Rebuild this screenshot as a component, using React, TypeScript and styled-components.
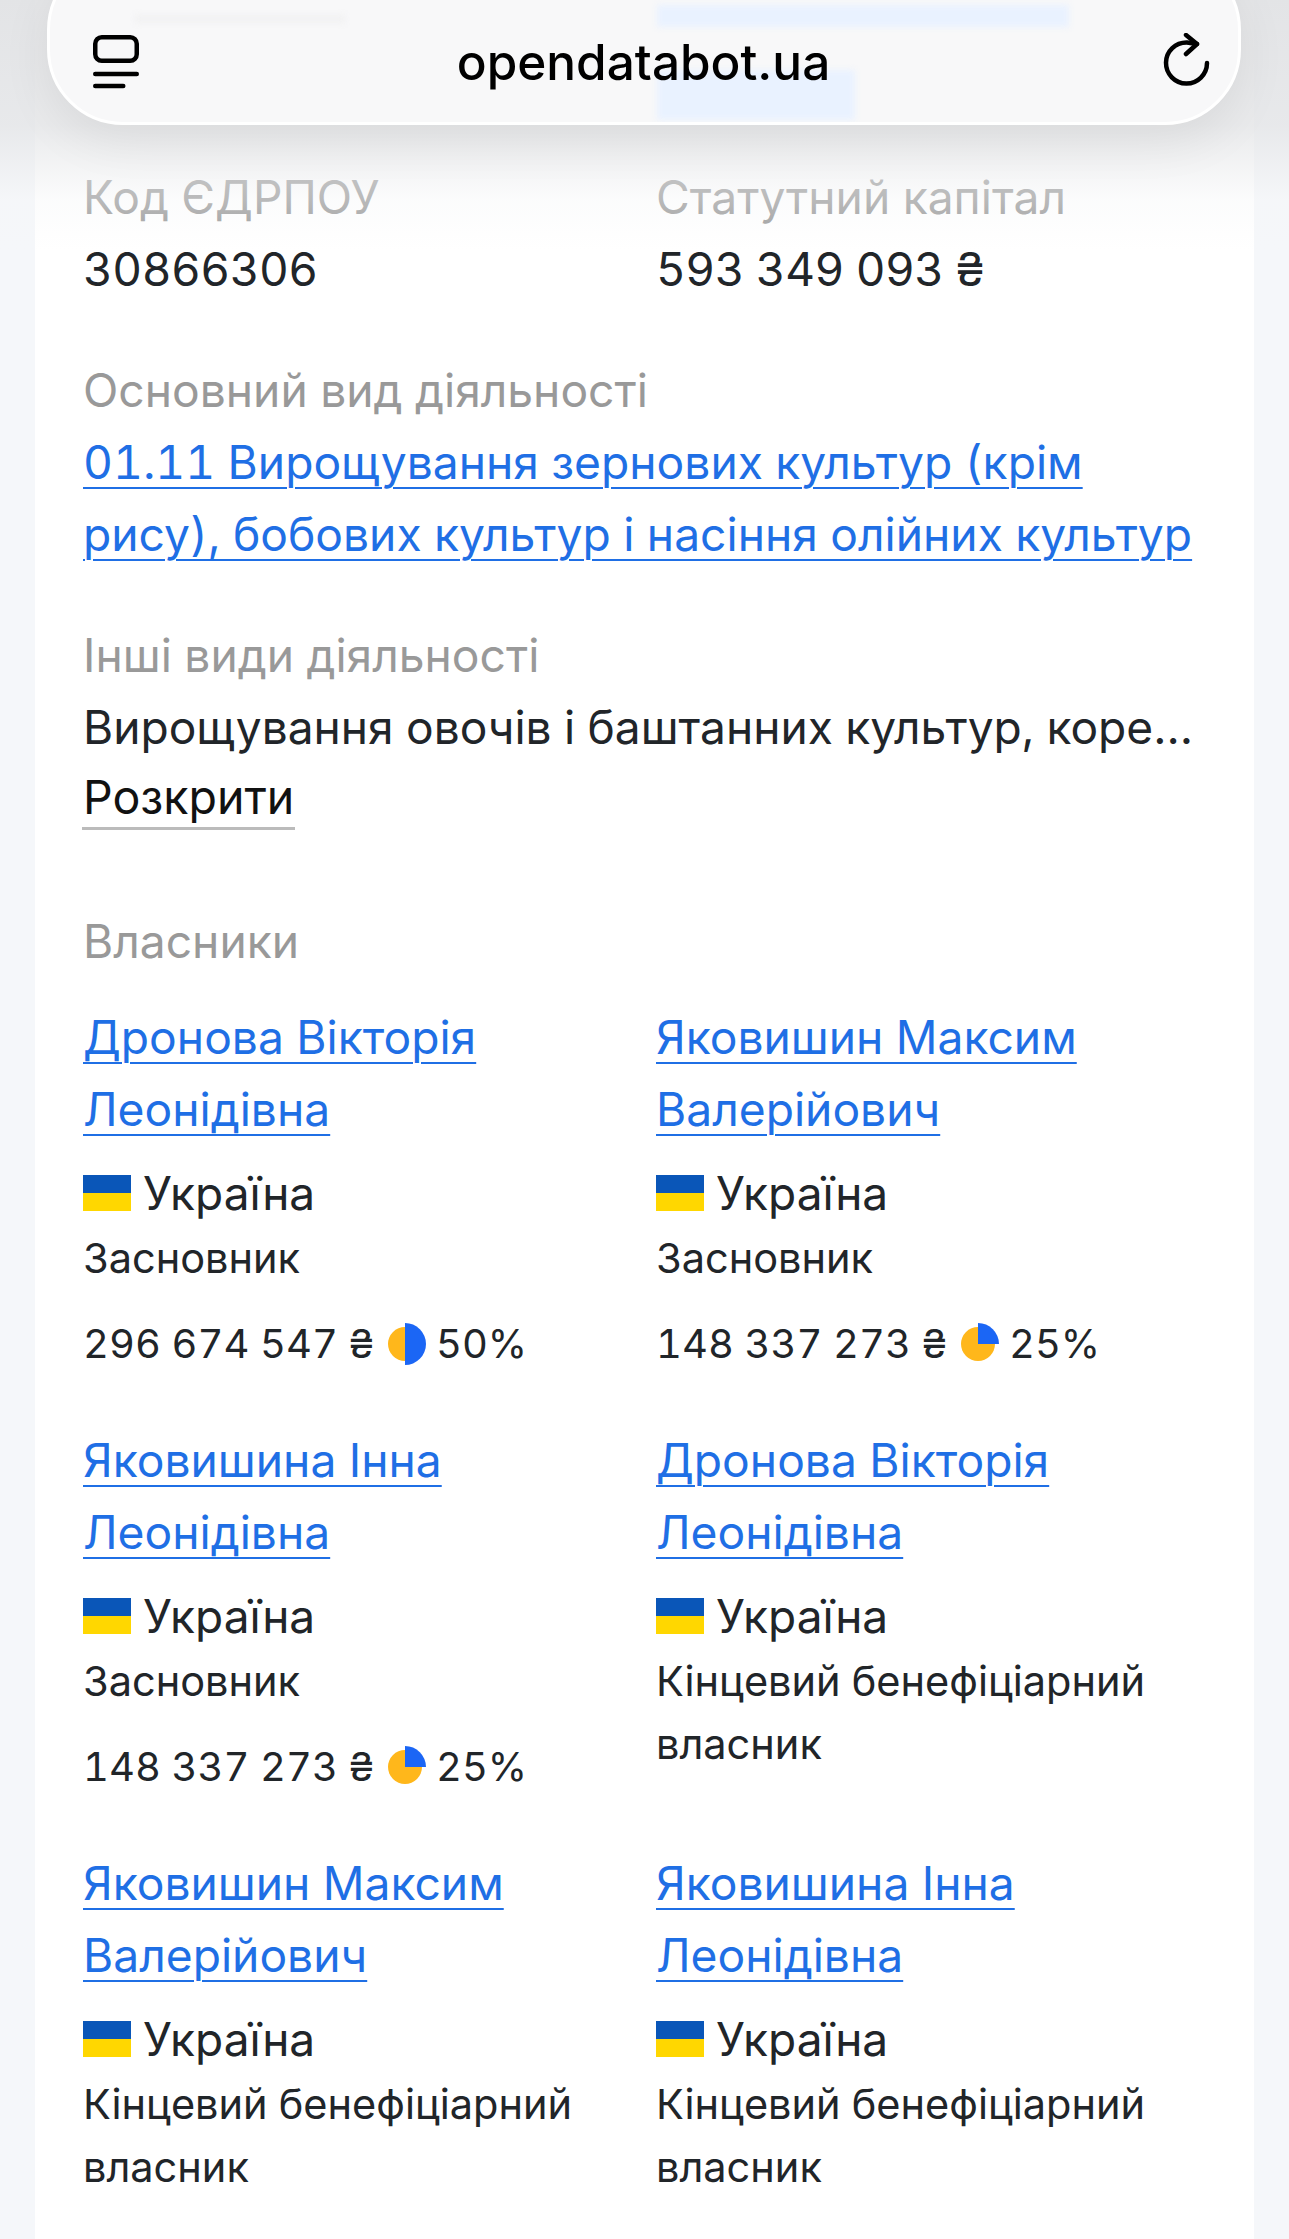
import styled, { createGlobalStyle } from 'styled-components';

const GlobalStyle = createGlobalStyle`
  html, body {
    margin: 0;
    padding: 0;
    background: #f5f7fa;
  }
  body {
    font-family: Inter, "Noto Sans", sans-serif;
    font-feature-settings: "tnum";
    color: #212529;
  }
`;

const Page = styled.div`
  position: relative;
  width: 1289px;
  height: 2239px;
  overflow: hidden;
  padding: 0 35px;
  box-sizing: border-box;
`;

const Card = styled.main`
  background: #fff;
  height: 100%;
  padding: 161px 49px 0 48px;
  box-sizing: border-box;
`;

const TopShade = styled.div`
  position: absolute;
  inset: 0 0 auto 0;
  height: 250px;
  background: linear-gradient(to bottom, rgba(225, 226, 228, 0.9) 0%, rgba(228, 229, 231, 0.8) 50%, rgba(245, 246, 247, 0.35) 80%, rgba(255, 255, 255, 0) 100%);
  pointer-events: none;
`;

const BrowserBar = styled.header`
  position: absolute;
  left: 47px;
  top: -46px;
  width: 1194px;
  height: 171px;
  border-radius: 76px;
  background: #f8f8f9;
  border: 3px solid #fff;
  box-shadow: 0 16px 50px rgba(0, 0, 0, 0.07);
  overflow: hidden;
  display: flex;
  align-items: center;
  justify-content: space-between;
  padding: 46px 25px 0 43px;
  box-sizing: border-box;
`;

const Ghost = styled.div<{ $top: number; $left: number; $width: number; $height: number; $tint: string }>`
  position: absolute;
  top: ${(p) => p.$top}px;
  left: ${(p) => p.$left}px;
  width: ${(p) => p.$width}px;
  height: ${(p) => p.$height}px;
  background: ${(p) => p.$tint};
  filter: blur(3px);
`;

const Url = styled.span`
  position: relative;
  margin: 0 15px 2px 0;
  font-size: 49.5px;
  font-weight: 500;
  font-feature-settings: normal;
  color: #000;
`;

const IconSlot = styled.svg`
  position: relative;
  flex: none;
  display: block;
`;

const TwoColumns = styled.div`
  display: grid;
  grid-template-columns: 548px 548px;
  column-gap: 25px;
`;

const Section = styled.section`
  margin-top: 49px;
`;

const OwnersSection = styled.section`
  margin-top: 75px;
`;

const Label = styled.div`
  font-size: 46.2px;
  line-height: 72px;
  color: #999;
`;

const Value = styled.div`
  font-size: 46px;
  line-height: 72px;
  letter-spacing: -0.5px;
  color: #212529;
`;

const TruncatedValue = styled(Value)`
  font-size: 46.1px;
  letter-spacing: 0;
  white-space: nowrap;
  overflow: hidden;
  text-overflow: ellipsis;
`;

const LinkBlock = styled.div`
  font-size: 46.2px;
  line-height: 72px;
`;

const Link = styled.a`
  color: #1f6fe5;
  text-decoration: underline;
  text-decoration-thickness: 2px;
  text-underline-offset: 8px;
`;

const Expand = styled.span`
  display: inline-block;
  padding: 4px 1px 0;
  margin: 0 0 0 -1px;
  font-size: 46.5px;
  line-height: 60px;
  color: #111;
  border-bottom: 3px solid #bbb;
`;

const OwnersHeading = styled(Label)`
  margin-bottom: 24px;
`;

const OwnersGrid = styled(TwoColumns)`
  row-gap: 0;
`;

const OwnerCard = styled.article`
  padding-bottom: 49px;
`;

const Country = styled.div`
  display: flex;
  align-items: center;
  gap: 12px;
  margin-top: 12px;
  font-size: 46px;
  line-height: 72px;
  color: #212529;
`;

const Flag = styled.span`
  display: block;
  width: 48px;
  height: 36px;
  flex: none;
  background: linear-gradient(to bottom, #0a56b8 0 50%, #ffd700 50% 100%);
`;

const Role = styled.div`
  margin-top: -2px;
  font-size: 41.5px;
  line-height: 63px;
  color: #212529;
`;

const Share = styled.div`
  display: flex;
  align-items: center;
  margin-top: 22px;
  font-size: 40px;
  line-height: 63px;
  color: #212529;
`;

const PieSvg = styled.svg`
  flex: none;
  margin: 0 10px 0 12px;
`;

type Owner = { name: string; role: string; amount?: string; share?: 25 | 50 };

const owners: Owner[] = [
  { name: 'Дронова Вікторія Леонідівна', role: 'Засновник', amount: '296 674 547 ₴', share: 50 },
  { name: 'Яковишин Максим Валерійович', role: 'Засновник', amount: '148 337 273 ₴', share: 25 },
  { name: 'Яковишина Інна Леонідівна', role: 'Засновник', amount: '148 337 273 ₴', share: 25 },
  { name: 'Дронова Вікторія Леонідівна', role: 'Кінцевий бенефіціарний власник' },
  { name: 'Яковишин Максим Валерійович', role: 'Кінцевий бенефіціарний власник' },
  { name: 'Яковишина Інна Леонідівна', role: 'Кінцевий бенефіціарний власник' },
];

function TabsIcon() {
  return (
    <IconSlot width="46" height="56" viewBox="0 0 46 56" fill="none">
      <rect x="2.25" y="2.25" width="41.5" height="23.5" rx="6.5" stroke="#000" strokeWidth="4.5" />
      <path d="M2.25 39h41.5" stroke="#000" strokeWidth="4.5" strokeLinecap="round" />
      <path d="M2.25 51h28" stroke="#000" strokeWidth="4.5" strokeLinecap="round" />
    </IconSlot>
  );
}

function ReloadIcon() {
  return (
    <IconSlot width="50" height="60" viewBox="0 0 50 60" fill="none">
      <path d="M44 30A20.5 20.5 0 1 1 24 9.5L34 11" stroke="#000" strokeWidth="4.5" strokeLinecap="round" />
      <path d="M23 2l11 9L23 21" stroke="#000" strokeWidth="4.5" strokeLinecap="round" strokeLinejoin="round" />
    </IconSlot>
  );
}

function Pie({ share }: { share: 25 | 50 }) {
  return (
    <PieSvg width="40" height="44" viewBox="0 0 40 44">
      <circle cx="19" cy="22" r="17" fill="#ffb71b" />
      {share === 25 ? (
        <path d="M19 22V1a21 21 0 0 1 21 21z" fill="#1b66f5" />
      ) : (
        <path d="M19 1a21 21 0 0 1 0 42z" fill="#1b66f5" />
      )}
    </PieSvg>
  );
}

function App() {
  return (
    <Page>
      <GlobalStyle />
      <Card>
        <TwoColumns>
          <div>
            <Label>Код ЄДРПОУ</Label>
            <Value>30866306</Value>
          </div>
          <div>
            <Label>Статутний капітал</Label>
            <Value>593 349 093 ₴</Value>
          </div>
        </TwoColumns>
        <Section>
          <Label>Основний вид діяльності</Label>
          <LinkBlock>
            <Link href="#">01.11 Вирощування зернових культур (крім рису), бобових культур і насіння олійних культур</Link>
          </LinkBlock>
        </Section>
        <Section>
          <Label>Інші види діяльності</Label>
          <TruncatedValue>Вирощування овочів і баштанних культур, коренеплодів і бульбоплодів</TruncatedValue>
          <Expand>Розкрити</Expand>
        </Section>
        <OwnersSection>
          <OwnersHeading>Власники</OwnersHeading>
          <OwnersGrid>
            {owners.map((owner) => (
              <OwnerCard key={owner.name + owner.role}>
                <LinkBlock>
                  <Link href="#">{owner.name}</Link>
                </LinkBlock>
                <Country>
                  <Flag />
                  Україна
                </Country>
                <Role>{owner.role}</Role>
                {owner.amount && owner.share && (
                  <Share>
                    {owner.amount}
                    <Pie share={owner.share} />
                    {owner.share}%
                  </Share>
                )}
              </OwnerCard>
            ))}
          </OwnersGrid>
        </OwnersSection>
      </Card>
      <TopShade />
      <BrowserBar>
        <Ghost $top={48} $left={607} $width={412} $height={22} $tint="#e9f2ff" />
        <Ghost $top={113} $left={607} $width={198} $height={50} $tint="#e9f2ff" />
        <Ghost $top={58} $left={85} $width={210} $height={8} $tint="#f1f1f2" />
        <TabsIcon />
        <Url>opendatabot.ua</Url>
        <ReloadIcon />
      </BrowserBar>
    </Page>
  );
}

export default App;
